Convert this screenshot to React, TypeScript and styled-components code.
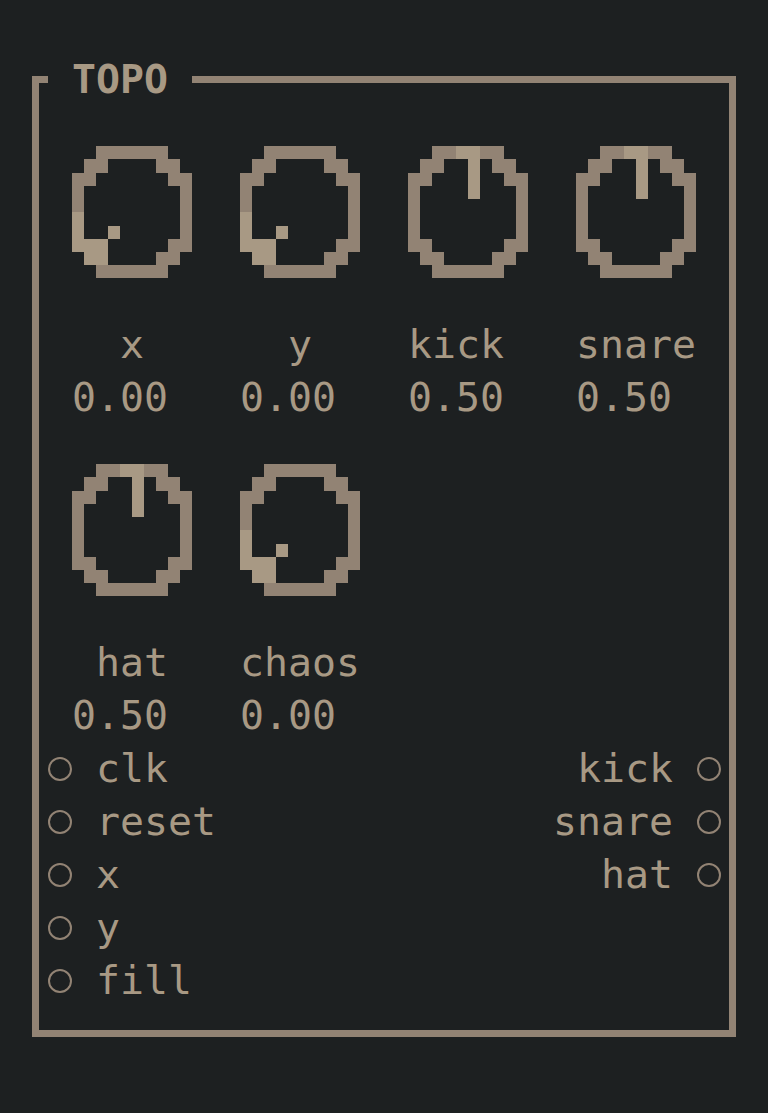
import styled, { createGlobalStyle } from "styled-components";

const GlobalStyle = createGlobalStyle`
  body {
    margin: 0;
    background: #1d2021;
  }
`;

const Screen = styled.div`
  width: 768px;
  height: 1113px;
  overflow: hidden;
  background: #1d2021;
  color: #a89984;
  font-family: "DejaVu Sans Mono", "Liberation Mono", monospace;
  font-size: 39.86px;
  line-height: 53px;
`;

const Panel = styled.section`
  box-sizing: border-box;
  width: 704px;
  height: 961px;
  margin: 76px 0 0 32px;
  border: 7px solid #928374;
  border-top: none;
  display: flex;
  flex-direction: column;
`;

const Header = styled.div`
  height: 7px;
  margin: 0 -7px;
  display: flex;
  align-items: center;
`;

const HeaderLine = styled.div<{ $width?: number }>`
  height: 7px;
  background: #928374;
  ${(p) => (p.$width ? `width: ${p.$width}px;` : "flex: 1;")}
`;

const Title = styled.h1`
  margin: 0;
  padding: 0 24px;
  height: 53px;
  font-size: 39.86px;
  line-height: 53px;
  font-weight: bold;
  color: #a89984;
`;

const Body = styled.div`
  padding: 23px 8px 23px 9px;
  display: flex;
  flex-direction: column;
`;

const KnobGrid = styled.div`
  display: grid;
  grid-template-columns: repeat(4, 120px);
  column-gap: 48px;
  margin-left: 24px;
`;

const KnobBox = styled.div`
  display: flex;
  flex-direction: column;
`;

const Dial = styled.div`
  height: 212px;
  display: flex;
  align-items: center;
`;

// terminal-style centring: whole cells, rounded down
const Label = styled.div<{ $cells: number }>`
  height: 53px;
  padding-left: ${(p) => p.$cells * 24}px;
  white-space: pre;
`;

const Value = styled.div`
  height: 53px;
  white-space: pre;
`;

const Ports = styled.div`
  display: flex;
  justify-content: space-between;
`;

const PortList = styled.div<{ $right?: boolean }>`
  display: flex;
  flex-direction: column;
  align-items: ${(p) => (p.$right ? "flex-end" : "flex-start")};
`;

const Port = styled.div<{ $right?: boolean }>`
  height: 53px;
  display: flex;
  align-items: center;
  gap: 24px;
  flex-direction: ${(p) => (p.$right ? "row-reverse" : "row")};
`;

const Jack = styled.span`
  box-sizing: border-box;
  width: 24px;
  height: 24px;
  border-radius: 50%;
  border: 2px solid #928374;
`;

// 10x10 octant pixels: '#' ring, 'o' lit
const ZERO = [
  "..######..",
  ".##....##.",
  "##......##",
  "#........#",
  "#........#",
  "o........#",
  "o..o.....#",
  "ooo.....##",
  ".oo....##.",
  "..######..",
];

const HALF = [
  "..##oo##..",
  ".##..o.##.",
  "##...o..##",
  "#....o...#",
  "#........#",
  "#........#",
  "#........#",
  "##......##",
  ".##....##.",
  "..######..",
];

function KnobArt({ value }: { value: number }) {
  const rows = value >= 0.25 ? HALF : ZERO;
  return (
    <svg width={120} height={132.5} viewBox="0 0 10 10" preserveAspectRatio="none" shapeRendering="crispEdges">
      {rows.map((row, y) =>
        row.split("").map((c, x) =>
          c === "." ? null : (
            <rect key={`${x}-${y}`} x={x} y={y} width={1} height={1} fill={c === "o" ? "#a89984" : "#928374"} />
          )
        )
      )}
    </svg>
  );
}

const knobs = [
  { name: "x", value: 0 },
  { name: "y", value: 0 },
  { name: "kick", value: 0.5 },
  { name: "snare", value: 0.5 },
  { name: "hat", value: 0.5 },
  { name: "chaos", value: 0 },
];

const inputs = ["clk", "reset", "x", "y", "fill"];
const outputs = ["kick", "snare", "hat"];

export default function App() {
  return (
    <>
      <GlobalStyle />
      <Screen>
        <Panel>
          <Header>
            <HeaderLine $width={16} />
            <Title>TOPO</Title>
            <HeaderLine />
          </Header>
          <Body>
            <KnobGrid>
              {knobs.map((k) => (
                <KnobBox key={k.name}>
                  <Dial>
                    <KnobArt value={k.value} />
                  </Dial>
                  <Label $cells={Math.max(0, Math.floor((5 - k.name.length) / 2))}>{k.name}</Label>
                  <Value>{k.value.toFixed(2)}</Value>
                </KnobBox>
              ))}
            </KnobGrid>
            <Ports>
              <PortList>
                {inputs.map((p) => (
                  <Port key={p}>
                    <Jack />
                    <span>{p}</span>
                  </Port>
                ))}
              </PortList>
              <PortList $right>
                {outputs.map((p) => (
                  <Port key={p} $right>
                    <Jack />
                    <span>{p}</span>
                  </Port>
                ))}
              </PortList>
            </Ports>
          </Body>
        </Panel>
      </Screen>
    </>
  );
}
